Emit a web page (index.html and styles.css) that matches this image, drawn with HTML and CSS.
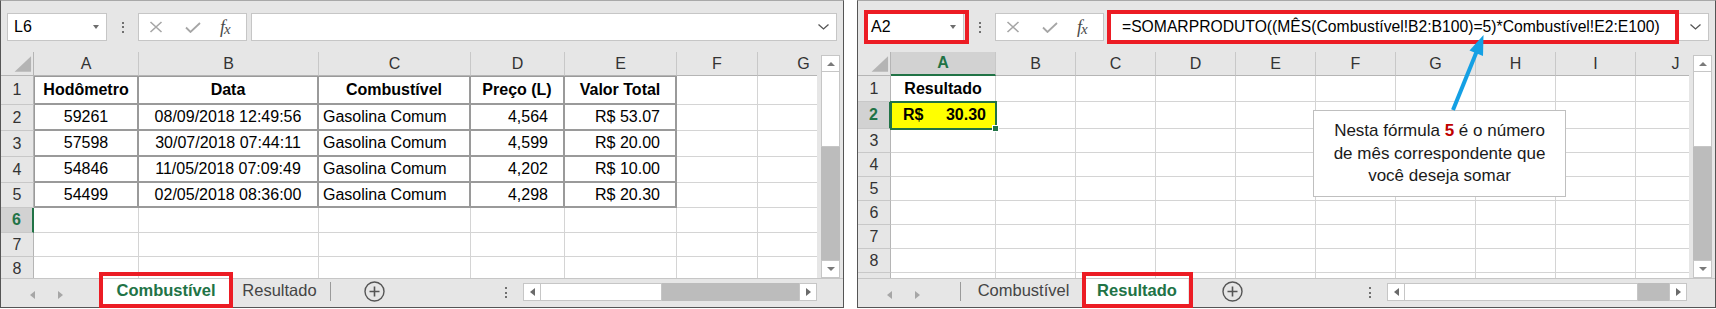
FILE: index.html
```html
<!DOCTYPE html>
<html lang="pt-BR">
<head>
    <meta charset="UTF-8">
    <meta name="viewport" content="width=device-width, initial-scale=1.0">
    <title>Combustível - SOMARPRODUTO por mês</title>
    <link rel="stylesheet" href="styles.css">
</head>
<body>

<div class="screens">

    <!-- planilha Combustível -->
    <div class="window win-left">
        <div class="toolbar">
            <div class="namebox"><span>L6</span><i class="dd"></i></div>
            <div class="grip"><b></b><b></b><b></b></div>
            <div class="fbuttons">
                <svg class="ic-x" width="14" height="12" viewBox="0 0 14 12"><path d="M1.5 1L12.5 11M12.5 1L1.5 11" stroke="#a6a6a6" stroke-width="1.6" fill="none"/></svg>
                <svg class="ic-ok" width="16" height="11" viewBox="0 0 16 11"><path d="M1 5.5L5.5 10L15 1" stroke="#a6a6a6" stroke-width="1.8" fill="none"/></svg>
                <span class="fx"><i>f</i><i class="x">x</i></span>
            </div>
            <div class="formula">
                <span></span>
                <svg width="11" height="6" viewBox="0 0 11 6"><path d="M0.5 0.5L5.5 5L10.5 0.5" stroke="#555" stroke-width="1.3" fill="none"/></svg>
            </div>
        </div>

        <div class="body">
            <div class="sheet sheet-dados">
                <div class="corner"><svg width="33" height="24" viewBox="0 0 33 24"><polygon points="14,20 31,20 31,4" fill="#b4b4b4"/></svg></div>
                <div class="hd">A</div><div class="hd">B</div><div class="hd">C</div><div class="hd">D</div><div class="hd">E</div><div class="hd">F</div><div class="hd">G</div>

                <div class="rh">1</div>
                <div class="t top first th ctr">Hodômetro</div><div class="t top th ctr">Data</div><div class="t top th ctr">Combustível</div><div class="t top th ctr">Preço (L)</div><div class="t top th ctr">Valor Total</div>
                <div></div><div></div>

                <div class="rh">2</div>
                <div class="t first ctr">59261</div><div class="t ctr">08/09/2018 12:49:56</div><div class="t">Gasolina Comum</div><div class="t num">4,564</div><div class="t num">R$ 53.07</div>
                <div></div><div></div>

                <div class="rh">3</div>
                <div class="t first ctr">57598</div><div class="t ctr">30/07/2018 07:44:11</div><div class="t">Gasolina Comum</div><div class="t num">4,599</div><div class="t num">R$ 20.00</div>
                <div></div><div></div>

                <div class="rh">4</div>
                <div class="t first ctr">54846</div><div class="t ctr">11/05/2018 07:09:49</div><div class="t">Gasolina Comum</div><div class="t num">4,202</div><div class="t num">R$ 10.00</div>
                <div></div><div></div>

                <div class="rh">5</div>
                <div class="t first ctr">54499</div><div class="t ctr">02/05/2018 08:36:00</div><div class="t">Gasolina Comum</div><div class="t num">4,298</div><div class="t num">R$ 20.30</div>
                <div></div><div></div>

                <div class="rh sel-rh">6</div>
                <div></div><div></div><div></div><div></div><div></div><div></div><div></div>

                <div class="rh">7</div>
                <div></div><div></div><div></div><div></div><div></div><div></div><div></div>

                <div class="rh">8</div>
                <div></div><div></div><div></div><div></div><div></div><div></div><div></div>
            </div>
            <div class="vscroll">
                <div class="sb-btn up"><i class="tri-up"></i></div>
                <div class="thumb"></div>
                <div class="track"></div>
                <div class="sb-btn down"><i class="tri-down"></i></div>
            </div>
        </div>

        <div class="tabbar">
            <div class="nav"><i class="tri-left"></i><i class="tri-right"></i></div>
            <div class="tab tab-1 active">Combustível</div>
            <div class="tab tab-2">Resultado</div>
            <div class="sep"></div>
            <div class="add"><svg width="21" height="21" viewBox="0 0 21 21"><circle cx="10.5" cy="10.5" r="9.5" fill="none" stroke="#555" stroke-width="1.4"/><path d="M10.5 5.5v10M5.5 10.5h10" stroke="#555" stroke-width="1.6"/></svg></div>
            <div class="grip grip-bottom"><b></b><b></b><b></b></div>
            <div class="hscroll">
                <div class="sb-btn"><i class="tri-left dark"></i></div>
                <div class="thumb"></div>
                <div class="track"></div>
                <div class="sb-btn"><i class="tri-right dark"></i></div>
            </div>
        </div>

        <div class="mark mark-tab-left"></div>
    </div>

    <!-- planilha Resultado -->
    <div class="window win-right">
        <div class="toolbar">
            <div class="namebox"><span>A2</span><i class="dd"></i></div>
            <div class="grip"><b></b><b></b><b></b></div>
            <div class="fbuttons">
                <svg class="ic-x" width="14" height="12" viewBox="0 0 14 12"><path d="M1.5 1L12.5 11M12.5 1L1.5 11" stroke="#a6a6a6" stroke-width="1.6" fill="none"/></svg>
                <svg class="ic-ok" width="16" height="11" viewBox="0 0 16 11"><path d="M1 5.5L5.5 10L15 1" stroke="#a6a6a6" stroke-width="1.8" fill="none"/></svg>
                <span class="fx"><i>f</i><i class="x">x</i></span>
            </div>
            <div class="formula">
                <span>=SOMARPRODUTO((MÊS(Combustível!B2:B100)=5)*Combustível!E2:E100)</span>
                <svg width="11" height="6" viewBox="0 0 11 6"><path d="M0.5 0.5L5.5 5L10.5 0.5" stroke="#555" stroke-width="1.3" fill="none"/></svg>
            </div>
        </div>

        <div class="body">
            <div class="sheet sheet-resultado">
                <div class="corner"><svg width="33" height="24" viewBox="0 0 33 24"><polygon points="14,20 31,20 31,4" fill="#b4b4b4"/></svg></div>
                <div class="hd sel-hd">A</div><div class="hd">B</div><div class="hd">C</div><div class="hd">D</div><div class="hd">E</div><div class="hd">F</div><div class="hd">G</div><div class="hd">H</div><div class="hd">I</div><div class="hd">J</div>

                <div class="rh">1</div>
                <div class="th ctr">Resultado</div>
                <div></div><div></div><div></div><div></div><div></div><div></div><div></div><div></div><div></div>

                <div class="rh sel-rh">2</div>
                <div class="total"><span>R$</span><span>30.30</span></div>
                <div></div><div></div><div></div><div></div><div></div><div></div><div></div><div></div><div></div>

                <div class="rh">3</div>
                <div></div><div></div><div></div><div></div><div></div><div></div><div></div><div></div><div></div><div></div>
                <div class="rh">4</div>
                <div></div><div></div><div></div><div></div><div></div><div></div><div></div><div></div><div></div><div></div>
                <div class="rh">5</div>
                <div></div><div></div><div></div><div></div><div></div><div></div><div></div><div></div><div></div><div></div>
                <div class="rh">6</div>
                <div></div><div></div><div></div><div></div><div></div><div></div><div></div><div></div><div></div><div></div>
                <div class="rh">7</div>
                <div></div><div></div><div></div><div></div><div></div><div></div><div></div><div></div><div></div><div></div>
                <div class="rh">8</div>
                <div></div><div></div><div></div><div></div><div></div><div></div><div></div><div></div><div></div><div></div>
                <div class="rh">9</div>
                <div></div><div></div><div></div><div></div><div></div><div></div><div></div><div></div><div></div><div></div>
            </div>
            <div class="vscroll">
                <div class="sb-btn up"><i class="tri-up"></i></div>
                <div class="thumb"></div>
                <div class="track"></div>
                <div class="sb-btn down"><i class="tri-down"></i></div>
            </div>
        </div>

        <div class="tabbar">
            <div class="nav"><i class="tri-left"></i><i class="tri-right"></i></div>
            <div class="sep"></div>
            <div class="tab tab-1 narrow">Combustível</div>
            <div class="tab tab-2 active">Resultado</div>
            <div class="add add-right"><svg width="21" height="21" viewBox="0 0 21 21"><circle cx="10.5" cy="10.5" r="9.5" fill="none" stroke="#555" stroke-width="1.4"/><path d="M10.5 5.5v10M5.5 10.5h10" stroke="#555" stroke-width="1.6"/></svg></div>
            <div class="grip grip-bottom"><b></b><b></b><b></b></div>
            <div class="hscroll hscroll-right">
                <div class="sb-btn"><i class="tri-left dark"></i></div>
                <div class="thumb"></div>
                <div class="track"></div>
                <div class="sb-btn"><i class="tri-right dark"></i></div>
            </div>
        </div>

        <div class="mark mark-name"></div>
        <div class="mark mark-formula"></div>
        <div class="mark mark-tab-right"></div>

        <div class="callout">
            Nesta fórmula <b>5</b> é o número<br>
            de mês correspondente que<br>
            você deseja somar
        </div>

        <svg class="arrow" width="857" height="306" viewBox="0 0 857 306">
            <path d="M595 109L618.5 51" stroke="#14a0e4" stroke-width="4" fill="none"/>
            <polygon points="625.5,34 625,55 611.5,49.5" fill="#14a0e4"/>
        </svg>
    </div>

</div>

</body>
</html>
```

FILE: styles.css
```css
body {
    margin: 0;
    background-color: #fff;
    font-family: 'Liberation Sans', Arial, sans-serif;
    font-size: 16px;
    color: #000;
}

.screens {
    display: flex;
    gap: 13px;
}

.window {
    position: relative;
    box-sizing: border-box;
    height: 308px;
    border: 1px solid #555;
    border-top-color: #a8a8a8;
    background-color: #e6e6e6;
    display: flex;
    flex-direction: column;
}

.win-left {
    width: 844px;
}

.win-right {
    width: 859px;
}

/* barra de fórmulas */

.toolbar {
    height: 51px;
    box-sizing: border-box;
    padding: 12px 6px 0 6px;
    display: flex;
    align-items: flex-start;
}

.namebox,
.fbuttons,
.formula {
    height: 28px;
    box-sizing: border-box;
    background-color: #fff;
    border: 1px solid #c6c6c6;
    display: flex;
    align-items: center;
}

.namebox {
    width: 100px;
    justify-content: space-between;
    padding: 0 7px 0 6px;
}

.dd {
    width: 0;
    height: 0;
    border-left: 3.5px solid transparent;
    border-right: 3.5px solid transparent;
    border-top: 4px solid #6d6d6d;
}

.grip {
    width: 31px;
    height: 28px;
    display: flex;
    flex-direction: column;
    align-items: center;
    justify-content: center;
    gap: 2.5px;
}

.grip b {
    width: 2px;
    height: 2px;
    background-color: #707070;
}

.fbuttons {
    width: 109px;
    padding-left: 10px;
}

.ic-ok {
    margin-left: 22px;
}

.fx {
    margin-left: 19px;
    font-family: 'Liberation Serif', 'Times New Roman', serif;
    font-size: 18px;
    color: #4a4a4a;
    letter-spacing: -1px;
}

.fx .x {
    font-size: 15px;
    position: relative;
    top: 1px;
}

.formula {
    flex: 1;
    margin-left: 4px;
    justify-content: space-between;
    padding: 0 7px 0 13px;
    font-size: 15.7px;
    white-space: nowrap;
}

/* grade */

.body {
    display: flex;
    height: 226px;
}

.sheet {
    flex: 1;
    min-width: 0;
    overflow: hidden;
    display: grid;
    align-content: start;
    background-color: #fff;
}

.sheet-dados {
    grid-template-columns: 33px 105px 180px 152px 94px 112px 81px 92px;
    grid-template-rows: 24px 29px 26px 26px 26px 25px 25px 24px 24px;
}

.sheet-resultado {
    grid-template-columns: 33px 105px repeat(9, 80px);
    grid-template-rows: 24px 26px 27px repeat(7, 24px);
}

.sheet > div {
    box-sizing: border-box;
    border-right: 1px solid #d4d4d4;
    border-bottom: 1px solid #d4d4d4;
    display: flex;
    align-items: center;
    padding: 0 4px;
    white-space: nowrap;
    overflow: hidden;
}

.sheet > .corner {
    padding: 0;
    background-color: #e6e6e6;
    border-right: 1px solid #b5b5b5;
    border-bottom: 1px solid #b5b5b5;
}

.sheet > .hd {
    justify-content: center;
    background-color: #e6e6e6;
    color: #333;
    border-right: 1px solid #c8c8c8;
    border-bottom: 1px solid #b5b5b5;
}

.sheet > .rh {
    justify-content: center;
    background-color: #e6e6e6;
    color: #333;
    border-right: 1px solid #b5b5b5;
    border-bottom: 1px solid #c8c8c8;
}

.sheet > .sel-hd {
    background-color: #d2d2d2;
    color: #217346;
    font-weight: bold;
    border-bottom: 2px solid #217346;
}

.sheet > .sel-rh {
    background-color: #d2d2d2;
    color: #217346;
    font-weight: bold;
    border-right: 2px solid #217346;
}

.sheet > .t {
    border-right: 2px solid #9a9a9a;
    border-bottom: 2px solid #9a9a9a;
}

.sheet > .first {
    border-left: 1px solid #9a9a9a;
}

.sheet > .top {
    border-top: 1px solid #9a9a9a;
}

.th {
    font-weight: bold;
}

.sheet > .ctr {
    justify-content: center;
}

.sheet > .num {
    justify-content: flex-end;
    padding-right: 15px;
}

.sheet > .total {
    position: relative;
    z-index: 1;
    overflow: visible;
    justify-content: space-between;
    padding: 0 9px 0 12px;
    background-color: #ffff00;
    font-weight: bold;
    outline: 2px solid #217346;
    outline-offset: -1px;
}

.total::after {
    content: '';
    position: absolute;
    right: -4px;
    bottom: -4px;
    width: 5px;
    height: 5px;
    background-color: #217346;
    border: 1px solid #fff;
}

/* barras de rolagem */

.vscroll {
    width: 26px;
    box-sizing: border-box;
    padding: 3px 3px 0 4px;
    display: flex;
    flex-direction: column;
}

.sb-btn {
    box-sizing: border-box;
    background-color: #fff;
    border: 1px solid #c6c6c6;
    display: flex;
    align-items: center;
    justify-content: center;
}

.vscroll .up {
    height: 17px;
}

.vscroll .down {
    height: 18px;
}

.vscroll .thumb {
    height: 75px;
    box-sizing: border-box;
    background-color: #fff;
    border: 1px solid #c6c6c6;
    border-top: none;
}

.track {
    flex: 1;
    background-color: #bcbcbc;
}

.tri-up,
.tri-down {
    width: 0;
    height: 0;
    border-left: 4px solid transparent;
    border-right: 4px solid transparent;
}

.tri-up {
    border-bottom: 4px solid #7a7a7a;
}

.tri-down {
    border-top: 4px solid #7a7a7a;
}

.tri-left,
.tri-right {
    width: 0;
    height: 0;
    border-top: 4.5px solid transparent;
    border-bottom: 4.5px solid transparent;
}

.tri-left {
    border-right: 5px solid #a6a6a6;
}

.tri-right {
    border-left: 5px solid #a6a6a6;
}

.tri-left.dark {
    border-right-color: #6a6a6a;
}

.tri-right.dark {
    border-left-color: #6a6a6a;
}

/* abas */

.tabbar {
    flex: 1;
    display: flex;
    box-sizing: border-box;
    border-top: 1px solid #c6c6c6;
}

.nav {
    width: 102px;
    box-sizing: border-box;
    padding: 4px 0 0 29px;
    display: flex;
    align-items: center;
    gap: 23px;
}

.tab {
    display: flex;
    align-items: center;
    justify-content: center;
    padding-bottom: 5px;
    box-sizing: border-box;
    font-size: 16.5px;
    color: #444;
}

.tab-1 {
    width: 126px;
}

.tab-1.narrow {
    width: 125px;
}

.tab-2 {
    width: 101px;
}

.tab.active {
    background-color: #fff;
    color: #217346;
    font-weight: bold;
}

.win-right .tab-2 {
    width: 102px;
}

.sep {
    width: 1px;
    height: 19px;
    align-self: center;
    margin-top: -3px;
    background-color: #9a9a9a;
}

.add {
    margin-left: 33px;
    display: flex;
    align-items: center;
    padding-bottom: 4px;
}

.add-right {
    margin-left: 34px;
}

.grip-bottom {
    width: 2px;
    height: auto;
    margin-left: auto;
    margin-right: 16px;
    padding-bottom: 1px;
}

.hscroll {
    width: 294px;
    height: 18px;
    margin: 4px 26px 0 0;
    display: flex;
}

.hscroll-right {
    width: 300px;
    margin-right: 28px;
}

.hscroll .sb-btn {
    width: 18px;
}

.hscroll .thumb {
    width: 121px;
    box-sizing: border-box;
    background-color: #fff;
    border: 1px solid #c6c6c6;
    border-left: none;
}

.hscroll-right .thumb {
    width: 233px;
}

/* anotações */

.mark {
    position: absolute;
    box-sizing: border-box;
    border: 4px solid #ec1c24;
}

.mark-tab-left {
    left: 98px;
    top: 271px;
    width: 134px;
    height: 36px;
}

.mark-name {
    left: 6px;
    top: 9px;
    width: 105px;
    height: 34px;
}

.mark-formula {
    left: 249px;
    top: 9px;
    width: 572px;
    height: 34px;
}

.mark-tab-right {
    left: 224px;
    top: 271px;
    width: 111px;
    height: 36px;
}

.callout {
    position: absolute;
    left: 455px;
    top: 109px;
    width: 253px;
    height: 87px;
    box-sizing: border-box;
    padding-top: 9px;
    background-color: #fff;
    border: 1px solid #bfbfbf;
    text-align: center;
    font-size: 17px;
    line-height: 22.5px;
    color: #1a1a1a;
}

.callout b {
    color: #c00000;
}

.arrow {
    position: absolute;
    left: 0;
    top: 0;
}
```
